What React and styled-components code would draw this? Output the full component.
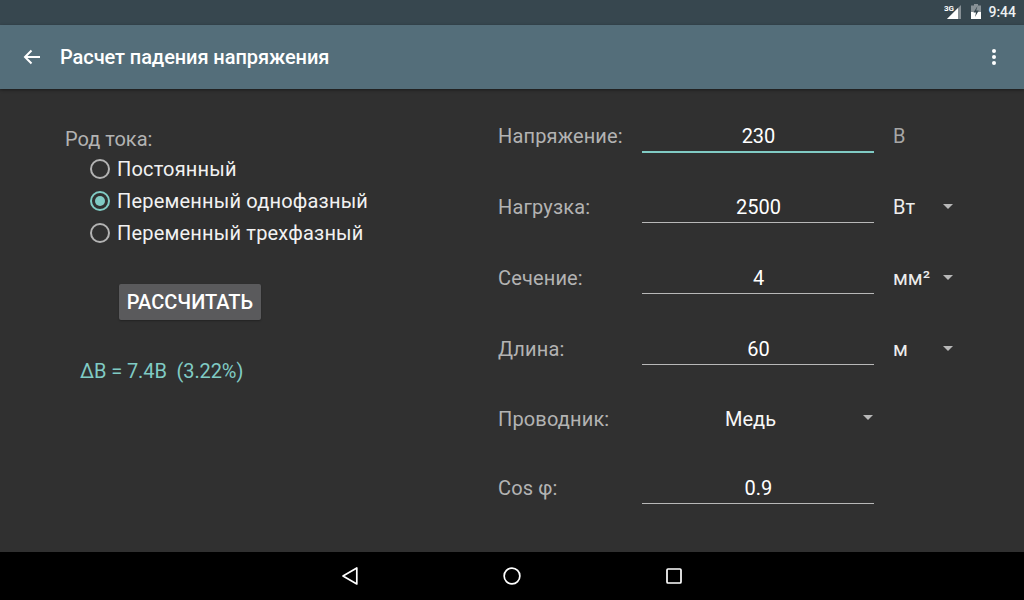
import React from "react";
import styled, { createGlobalStyle } from "styled-components";

const Global = createGlobalStyle`
  html, body { margin: 0; padding: 0; background: #303030; }
  body { font-family: Roboto, "Noto Sans", sans-serif; }
`;

const Screen = styled.div`
  width: 1024px; height: 600px; display: flex; flex-direction: column;
  background: #303030; overflow: hidden;
`;
const StatusBar = styled.div`
  height: 25px; flex: none; background: #37474f; display: flex; align-items: center;
  justify-content: flex-end; padding-right: 8px; gap: 7px; box-sizing: border-box;
`;
const Clock = styled.span`
  color: #eef1f2; font-size: 14px; font-weight: 500; line-height: 25px;
`;
const SignalIcon = styled.svg`
  display: block; margin-right: 2px;
`;
const BatteryIcon = styled.svg`
  display: block;
`;
const Toolbar = styled.header`
  height: 64px; flex: none; background: #546e7a; display: flex; align-items: center;
  box-shadow: 0 1px 3px rgba(0,0,0,.45); position: relative; z-index: 1;
`;
const BackButton = styled.div`
  width: 60px; flex: none; display: flex; padding-left: 23px; box-sizing: border-box;
`;
const Title = styled.h1`
  flex: 1; margin: 0; font-size: 20px; font-weight: 500; color: #fff; letter-spacing: -0.08px;
`;
const MenuButton = styled.div`
  display: flex; flex-direction: column; gap: 2px; padding-right: 28px;
`;
const Dot = styled.i`
  width: 4px; height: 4px; border-radius: 50%; background: #fff; display: block;
`;
const Content = styled.main`
  flex: 1; display: flex; min-height: 0;
`;
const LeftPane = styled.section`
  width: 498px; flex: none; padding: 38px 0 0 65px; box-sizing: border-box;
  display: flex; flex-direction: column; align-items: flex-start;
`;
const GroupLabel = styled.div`
  font-size: 20px; line-height: 24px; color: #b3b3b3; margin-bottom: 2px;
`;
const RadioList = styled.div`
  display: flex; flex-direction: column; padding-left: 25px;
`;
const RadioRow = styled.div`
  height: 32px; display: flex; align-items: center; gap: 7px;
  font-size: 20px; color: #f2f2f2; letter-spacing: 0.19px;
`;
const RadioMark = styled.span`
  width: 20px; height: 20px; box-sizing: border-box; border-radius: 50%; flex: none;
  border: 2px solid ${p => (p.$on ? "#80cbc4" : "#b3b3b3")};
  display: flex; align-items: center; justify-content: center;
  &::after {
    content: ""; width: 10px; height: 10px; border-radius: 50%;
    background: ${p => (p.$on ? "#80cbc4" : "transparent")};
  }
`;
const ActionButton = styled.button`
  margin: 35px 0 0 54px; width: 142px; height: 36px; padding: 0; border: 0; border-radius: 2px;
  background: #5a5a5c; color: #fff; font: 500 20px Roboto, sans-serif;
  box-shadow: 0 1px 2px rgba(0,0,0,.3);
`;
const Result = styled.div`
  margin: 39px 0 0 15px; font-size: 20px; line-height: 24px; color: #80cbc4; white-space: pre;
  letter-spacing: -0.1px;
`;
const FormPane = styled.section`
  flex: 1; padding-top: 29px; display: flex; flex-direction: column;
`;
const FormRow = styled.div`
  height: ${p => p.$h}px; display: grid; grid-template-columns: 144px 232px 19px 1fr;
  align-items: start;
`;
const FieldLabel = styled.div`
  font-size: 20px; line-height: 36px; color: #b3b3b3; letter-spacing: 0.15px;
`;
const Field = styled.div`
  height: 33px; line-height: 36px; text-align: center; padding-left: 1px;
  font-size: 20px; color: #fff;
  border-bottom: ${p => (p.$focus ? "2px solid #80cbc4" : "1px solid #b8b8b8")};
`;
const SelectField = styled.div`
  height: 36px; line-height: 36px; font-size: 20px; color: #f7f7f7; display: flex;
  justify-content: space-between; padding: 0 1px 0 83px;
`;
const Unit = styled.div`
  grid-column: 4; width: 60px; display: flex; justify-content: space-between;
  font-size: 20px; line-height: 36px; color: ${p => (p.$dim ? "#a6a6a6" : "#ededed")};
`;
const Caret = styled.span`
  width: 0; height: 0; border-left: 5px solid transparent; border-right: 5px solid transparent;
  border-top: 5px solid #b8b8b8; margin-top: ${p => p.$top || 15}px;
`;
const NavBar = styled.nav`
  height: 48px; flex: none; background: #000; display: flex; justify-content: center;
  align-items: center; gap: 138px;
`;
const NavIcon = styled.svg`
  display: block;
`;

const StatusIcons = () => (
  <>
    <SignalIcon width="18" height="25" viewBox="0 0 18 25">
      <path d="M3 19 17 5v14z" fill="#fff" opacity=".4" />
      <path d="M3 19 14 8v11z" fill="#fff" />
      <text x="0" y="11" fontFamily="Roboto" fontWeight="700" fontSize="8" fill="#fff">3G</text>
    </SignalIcon>
    <BatteryIcon width="10" height="25" viewBox="0 0 10 25">
      <path d="M3 4h4v1.500h3V19H0V5.500h3z" fill="#fff" opacity=".4" />
      <path d="M0 12h10v7H0z" fill="#fff" />
      <path d="M6.500 6 2.500 12.500H5l-1 4.500 3.800-6.500H5.200z" fill="#37474f" />
    </BatteryIcon>
  </>
);

export default function App() {
  return (
    <Screen>
      <Global />
      <StatusBar>
        <StatusIcons />
        <Clock>9:44</Clock>
      </StatusBar>
      <Toolbar>
        <BackButton>
          <svg width="18" height="16" viewBox="0 0 18 16" fill="none" stroke="#fff" strokeWidth="2">
            <path d="M17 8H2M8.500 1.500 2 8l6.500 6.500" />
          </svg>
        </BackButton>
        <Title>Расчет падения напряжения</Title>
        <MenuButton><Dot /><Dot /><Dot /></MenuButton>
      </Toolbar>
      <Content>
        <LeftPane>
          <GroupLabel>Род тока:</GroupLabel>
          <RadioList>
            <RadioRow><RadioMark />Постоянный</RadioRow>
            <RadioRow><RadioMark $on />Переменный однофазный</RadioRow>
            <RadioRow><RadioMark />Переменный трехфазный</RadioRow>
          </RadioList>
          <ActionButton>РАССЧИТАТЬ</ActionButton>
          <Result>ΔВ = 7.4В  (3.22%)</Result>
        </LeftPane>
        <FormPane>
          <FormRow $h={71}>
            <FieldLabel>Напряжение:</FieldLabel>
            <Field $focus>230</Field>
            <Unit $dim>В</Unit>
          </FormRow>
          <FormRow $h={71}>
            <FieldLabel>Нагрузка:</FieldLabel>
            <Field>2500</Field>
            <Unit>Вт<Caret /></Unit>
          </FormRow>
          <FormRow $h={71}>
            <FieldLabel>Сечение:</FieldLabel>
            <Field>4</Field>
            <Unit>мм²<Caret /></Unit>
          </FormRow>
          <FormRow $h={70}>
            <FieldLabel>Длина:</FieldLabel>
            <Field>60</Field>
            <Unit>м<Caret /></Unit>
          </FormRow>
          <FormRow $h={69}>
            <FieldLabel>Проводник:</FieldLabel>
            <SelectField>Медь<Caret $top={14} /></SelectField>
          </FormRow>
          <FormRow $h={37}>
            <FieldLabel>Cos φ:</FieldLabel>
            <Field>0.9</Field>
          </FormRow>
        </FormPane>
      </Content>
      <NavBar>
        <NavIcon width="24" height="24" viewBox="0 0 24 24" fill="none" stroke="#fff" strokeWidth="1.7">
          <path d="M18.800 4v16L5 12z" strokeLinejoin="round" />
        </NavIcon>
        <NavIcon width="24" height="24" viewBox="0 0 24 24" fill="none" stroke="#fff" strokeWidth="1.7">
          <circle cx="12" cy="12" r="7.850" />
        </NavIcon>
        <NavIcon width="24" height="24" viewBox="0 0 24 24" fill="none" stroke="#fff" strokeWidth="1.7">
          <rect x="5" y="5" width="14" height="14" rx="1" />
        </NavIcon>
      </NavBar>
    </Screen>
  );
}
